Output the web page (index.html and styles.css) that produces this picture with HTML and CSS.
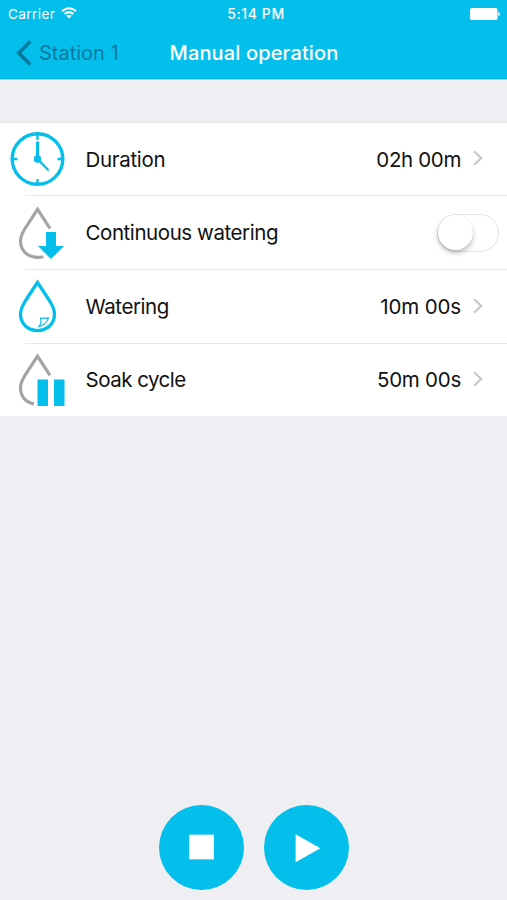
FILE: index.html
```html
<!DOCTYPE html>
<html lang="en">
<head>
<meta charset="utf-8">
<title>Manual operation</title>
<link rel="stylesheet" href="styles.css">
</head>
<body>
<div class="screen">
  <header class="header">
    <div class="status">
      <div class="carrier"><span>Carrier</span>
        <svg class="wifi" width="16" height="12" viewBox="0 0 16 12" fill="none" stroke="#fff" stroke-width="2"><path d="M1 4.3Q8-1.7 15 4.3M3.5 7Q8 3.2 12.5 7"/><path d="M8 11.6 5.2 8.8Q8 6.8 10.8 8.8Z" fill="#fff" stroke="none"/></svg>
      </div>
      <div class="time">5:14 PM</div>
      <svg class="battery" width="30" height="12" viewBox="0 0 30 12" fill="#fff"><rect width="27.5" height="12" rx="1.7"/><path d="M28.2 4Q30 4.3 30 6T28.2 8Z"/></svg>
    </div>
    <nav class="nav">
      <a class="back"><svg width="16" height="26" viewBox="0 0 16 26" fill="none" stroke="#087aa0" stroke-width="3.6"><path d="M14.2 1.5 2.7 13 14.2 24.5"/></svg><span>Station 1</span></a>
      <h1 class="title">Manual operation</h1>
      <span></span>
    </nav>
  </header>
  <main class="list">
    <div class="row">
      <svg class="icon clock" width="66" height="66" viewBox="0 0 66 66" fill="none" stroke="#04bfeb"><circle cx="27.5" cy="33" r="25.3" stroke-width="3.4"/><path d="M27.5 8v6M27.5 53v5M2.5 33h5M47.5 33h5" stroke-width="2.3"/><path d="M27.5 33V15.5" stroke-width="3"/><path d="M27.5 33 38 43.7" stroke-width="2.3" stroke-linecap="round"/><circle cx="27.5" cy="33" r="3.7" fill="#04bfeb" stroke="none"/></svg>
      <span class="label duration">Duration</span><span class="value">02h 00m</span>
      <svg class="chevron up" width="10" height="16" viewBox="0 0 10 16"><path d="M1.2 1.2 8.2 8 1.2 14.8"/></svg>
    </div>
    <div class="row">
      <svg class="icon" width="66" height="66" viewBox="0 0 66 66" fill="none"><path d="M40 28.5 27.5 9.300C22.500 17 18.500 23 15 28.500C12 33.500 10.500 37 10.500 41C10.500 52.500 20.500 59.500 33.500 56.800" stroke="#a4a4a4" stroke-width="3.2"/><path d="M36 32h10v14h8L41 59 28 46h8Z" fill="#04bfeb"/></svg>
      <span class="label">Continuous watering</span>
      <span class="switch"><span class="knob"></span></span>
    </div>
    <div class="row">
      <svg class="icon drop" width="66" height="66" viewBox="0 0 66 66" fill="none" stroke="#04bfeb"><path d="M27.5 9.3C22.500 17 18.500 23 15 28.500C12 33.500 10.500 37 10.500 41C10.500 51 18 57.600 27.500 57.600S44.500 51 44.500 41C44.500 37 43 33.500 40 28.500C36.500 23 32.500 17 27.500 9.300Z" stroke-width="3.3"/><path d="M30.500 45.300 38.500 44.800Q36.500 51.500 29 53.500Q32 49.500 30.500 45.300Z" stroke-width="1.200"/></svg>
      <span class="label">Watering</span><span class="value ten">10m 00s</span>
      <svg class="chevron up" width="10" height="16" viewBox="0 0 10 16"><path d="M1.2 1.2 8.2 8 1.2 14.8"/></svg>
    </div>
    <div class="row">
      <svg class="icon drop" width="66" height="66" viewBox="0 0 66 66" fill="none"><path d="M40 29.3 27.5 10.100C22.500 17.800 18.500 23.800 15 29.300C12 34.300 10.500 38 10.500 42C10.500 50.500 16 56.500 24 57.800" stroke="#a4a4a4" stroke-width="3.2"/><path d="M27.5 33.5h10.500v26.500H27.500zM44 33.500h10.500v26.500H44z" fill="#04bfeb"/></svg>
      <span class="label soak">Soak cycle</span><span class="value fifty">50m 00s</span>
      <svg class="chevron" width="10" height="16" viewBox="0 0 10 16"><path d="M1.2 1.2 8.2 8 1.2 14.8"/></svg>
    </div>
  </main>
  <footer class="controls">
    <button class="control" aria-label="Stop"><svg width="86" height="86" viewBox="0 0 86 86" fill="#fff"><path d="M30.5 30h25v25h-25z"/></svg></button>
    <button class="control" aria-label="Start"><svg width="86" height="86" viewBox="0 0 86 86" fill="#fff"><path d="M32 29.5v28.500L57 43.700Z"/></svg></button>
  </footer>
</div>
</body>
</html>
```
FILE: styles.css
```css
* { box-sizing: border-box; }
body { margin: 0; font-family: Inter, "Liberation Sans", sans-serif; color: #111; }
.screen { height: 900px; background: #efeef3; display: flex; flex-direction: column; }
.header { height: 80px; background: #04bfeb; color: #fff; border-bottom: 1px solid #8cdef3; }
.status { height: 27px; padding: 0 7px 0 8px; display: grid; grid-template-columns: 1fr auto 1fr; align-items: center; font-size: 13.5px; }
.carrier { display: flex; align-items: center; gap: 6px; letter-spacing: .45px; }
.wifi { margin-top: -2px; }
.time { margin-left: 4px; font-weight: 550; font-size: 14px; letter-spacing: .6px; }
.battery { justify-self: end; }
.nav { height: 51px; padding-left: 16px; display: grid; grid-template-columns: 1fr auto 1fr; align-items: center; }
.back { display: flex; align-items: center; gap: 7px; color: #087aa0; font-size: 20px; white-space: nowrap; }
.title { margin: 0 15px 0 0; font-size: 20px; font-weight: 550; letter-spacing: .15px; white-space: nowrap; }
.list { margin-top: 42px; height: 294px; background: #fff; border-top: 1px solid #e4e4e7; display: grid; grid-template-rows: 73px 74px 74px 72px; }
.row { display: flex; align-items: center; padding-left: 10px; background: linear-gradient(#e9e9eb, #e9e9eb) 25px 100% / 100% 1px no-repeat; }
.row:last-child { background: none; }
.icon { flex: none; margin-right: 9.5px; }
.clock { margin-top: -2px; }
.drop { margin-top: -2px; }
.label, .value { font-size: 20.5px; white-space: nowrap; line-height: 26px; }
.label { margin-right: auto; letter-spacing: -.43px; }
.duration { letter-spacing: -.3px; }
.soak { letter-spacing: -.5px; }
.value { letter-spacing: -.35px; }
.ten { letter-spacing: -.15px; }
.fifty { letter-spacing: -.25px; }
.chevron { margin: -2px 24px 0 12px; fill: none; stroke: #c8c8cc; stroke-width: 2.1; }
.up { margin-top: -3px; }
.switch { width: 62px; height: 38px; margin-right: 8px; border: 1.5px solid #e3e3e3; border-radius: 19px; }
.knob { display: block; width: 35px; height: 35px; border-radius: 50%; background: #fff; box-shadow: 0 3px 5px rgba(0,0,0,.25), 0 1px 1px rgba(0,0,0,.07); }
.controls { margin-top: auto; padding: 0 0 10px; display: flex; justify-content: center; gap: 20px; }
.control { width: 85px; height: 85px; padding: 0; border: 0; border-radius: 50%; background: #04bfeb; }
.control svg { display: block; width: 85px; height: 85px; }
```
